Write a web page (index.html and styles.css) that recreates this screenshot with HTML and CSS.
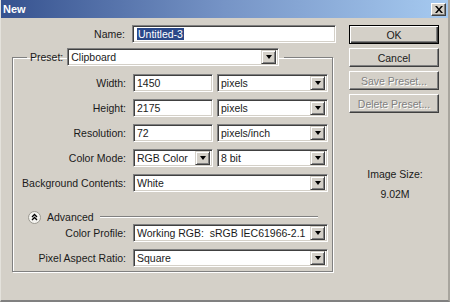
FILE: index.html
```html
<!DOCTYPE html>
<html lang="en">
<head>
    <meta charset="UTF-8">
    <title>New</title>
    <link rel="stylesheet" href="styles.css">
</head>
<body>
    <div class="window">
        <div class="titlebar">
            <span class="title">New</span>
            <span class="close">
                <svg width="8" height="7" viewBox="0 0 8 7"><path d="M0 0h2l2 2.5L6 0h2L5 3.5 8 7H6L4 4.5 2 7H0l3-3.5z" fill="#000"/></svg>
            </span>
        </div>

        <div class="client">
            <div class="main">
                <div class="name-row">
                    <label class="lbl">Name:</label>
                    <div class="edit name"><span class="selected">Untitled-3</span></div>
                </div>

                <fieldset class="group">
                    <legend>
                        <span class="legend-lbl">Preset:</span>
                        <div class="combo preset"><span>Clipboard</span><span class="drop"></span></div>
                    </legend>

                    <div class="rows">
                        <label class="lbl">Width:</label>
                        <div class="edit">1450</div>
                        <div class="combo"><span>pixels</span><span class="drop"></span></div>

                        <label class="lbl">Height:</label>
                        <div class="edit">2175</div>
                        <div class="combo"><span>pixels</span><span class="drop"></span></div>

                        <label class="lbl">Resolution:</label>
                        <div class="edit">72</div>
                        <div class="combo"><span>pixels/inch</span><span class="drop"></span></div>

                        <label class="lbl">Color Mode:</label>
                        <div class="combo"><span>RGB Color</span><span class="drop"></span></div>
                        <div class="combo"><span>8 bit</span><span class="drop"></span></div>

                        <label class="lbl">Background Contents:</label>
                        <div class="combo wide"><span>White</span><span class="drop"></span></div>

                        <div class="advanced">
                            <span class="adv-btn">
                                <svg width="13" height="13" viewBox="0 0 13 13">
                                    <circle cx="6.5" cy="6.5" r="6" fill="#f4f3ef" stroke="#9a9890"/>
                                    <path d="M4 6l2.5-2.5L9 6M4 9l2.5-2.5L9 9" fill="none" stroke="#000" stroke-width="1.3"/>
                                </svg>
                            </span>
                            <span class="adv-text">Advanced</span>
                            <span class="etched"></span>
                        </div>

                        <label class="lbl">Color Profile:</label>
                        <div class="combo wide"><span>Working RGB:&nbsp; sRGB IEC61966-2.1</span><span class="drop"></span></div>

                        <label class="lbl">Pixel Aspect Ratio:</label>
                        <div class="combo wide"><span>Square</span><span class="drop"></span></div>
                    </div>
                </fieldset>
            </div>

            <div class="side">
                <button class="btn default">OK</button>
                <button class="btn">Cancel</button>
                <button class="btn" disabled>Save Preset...</button>
                <button class="btn" disabled>Delete Preset...</button>

                <div class="image-size">
                    <p>Image Size:</p>
                    <p>9.02M</p>
                </div>
            </div>
        </div>
    </div>
</body>
</html>
```

FILE: styles.css
```css
* {
    margin: 0;
    padding: 0;
    box-sizing: border-box;
}

body {
    font-family: "Liberation Sans", Arial, sans-serif;
    font-size: 10.5px;
    color: #1a1a1a;
    background: #d4d0c8;
}

.window {
    width: 450px;
    height: 302px;
    background: #d4d0c8;
    border-left: 1px solid #e4e2dc;
    border-right: 2px solid #a8a59e;
    border-bottom: 2px solid #808080;
    overflow: hidden;
}

.titlebar {
    height: 18px;
    display: flex;
    align-items: center;
    justify-content: space-between;
    padding: 0 2px 0 2px;
    background: linear-gradient(to right, #36528f 0%, #7694c6 50%, #a6caf0 100%);
}

.title {
    color: #fff;
    font-weight: bold;
    font-size: 11px;
}

.close {
    width: 15px;
    height: 13px;
    display: flex;
    align-items: center;
    justify-content: center;
    background: #d4d0c8;
    border: 1px solid;
    border-color: #fff #404040 #404040 #fff;
    box-shadow: inset -1px -1px 0 #808080;
}

.client {
    display: flex;
    padding-top: 7px;
}

.main {
    width: 336px;
    padding-left: 11px;
}

.lbl {
    text-align: right;
    padding-right: 3px;
    line-height: 18px;
    white-space: nowrap;
}

.name-row {
    display: flex;
    gap: 4px;
    height: 18px;
}

.name-row .lbl {
    width: 116px;
}

.edit,
.combo {
    height: 18px;
    background: #fff;
    border: 1px solid;
    border-color: #808080 #fff #fff #808080;
    box-shadow: inset 1px 1px 0 #404040, inset -1px -1px 0 #d4d0c8;
    padding: 0 3px;
    line-height: 16px;
    white-space: nowrap;
    overflow: hidden;
}

.edit.name {
    width: 204px;
    padding-left: 4px;
}

.selected {
    background: #2a4889;
    color: #fff;
    padding: 0 1px;
}

.combo {
    display: flex;
    align-items: center;
    justify-content: space-between;
    padding-right: 2px;
}

.drop {
    flex: none;
    width: 15px;
    height: 14px;
    background: #d4d0c8;
    border: 1px solid;
    border-color: #d4d0c8 #404040 #404040 #d4d0c8;
    box-shadow: inset 1px 1px 0 #fff, inset -1px -1px 0 #808080;
    display: flex;
    align-items: center;
    justify-content: center;
}

.drop::after {
    content: "";
    border-left: 3.5px solid transparent;
    border-right: 3.5px solid transparent;
    border-top: 4px solid #000;
}

.group {
    margin-top: 5px;
    width: 321px;
    border: 1px solid #808080;
    box-shadow: 1px 1px 0 #fff, inset 1px 1px 0 #fff;
    padding: 8px 0 4px 0;
}

.group legend {
    margin-left: 14px;
    padding: 0 5px 0 3px;
    display: flex;
    align-items: center;
    gap: 4px;
}

.legend-lbl {
    line-height: 18px;
}

.combo.preset {
    width: 212px;
}

.rows {
    display: grid;
    grid-template-columns: 116px 80px 111px;
    grid-auto-rows: 18px;
    column-gap: 4px;
    row-gap: 7px;
}

.combo.wide {
    grid-column: span 2;
}

.advanced {
    grid-column: 1 / -1;
    height: 12px;
    margin: 12px 0 11px 0;
    display: flex;
    align-items: center;
    padding-left: 15px;
    padding-right: 10px;
}

.adv-btn {
    display: flex;
    width: 13px;
    height: 13px;
}

.adv-text {
    margin-left: 6px;
}

.etched {
    flex: 1;
    margin-left: 6px;
    height: 2px;
    border-top: 1px solid #808080;
    border-bottom: 1px solid #fff;
}

.side {
    width: 104px;
    padding-left: 12px;
    display: flex;
    flex-direction: column;
    gap: 4px;
}

.btn {
    width: 90px;
    height: 19px;
    font-family: inherit;
    font-size: 10.5px;
    color: #1a1a1a;
    background: #d4d0c8;
    border: 1px solid;
    border-color: #fff #404040 #404040 #fff;
    box-shadow: inset -1px -1px 0 #808080;
}

.btn.default {
    border: 1px solid #000;
    box-shadow: inset 1px 1px 0 #fff, inset -1px -1px 0 #404040, inset -2px -2px 0 #808080;
}

.btn:disabled {
    color: #808080;
    text-shadow: 1px 1px 0 #fff;
}

.image-size {
    margin-top: 47px;
    text-align: center;
    line-height: 20px;
}
```
